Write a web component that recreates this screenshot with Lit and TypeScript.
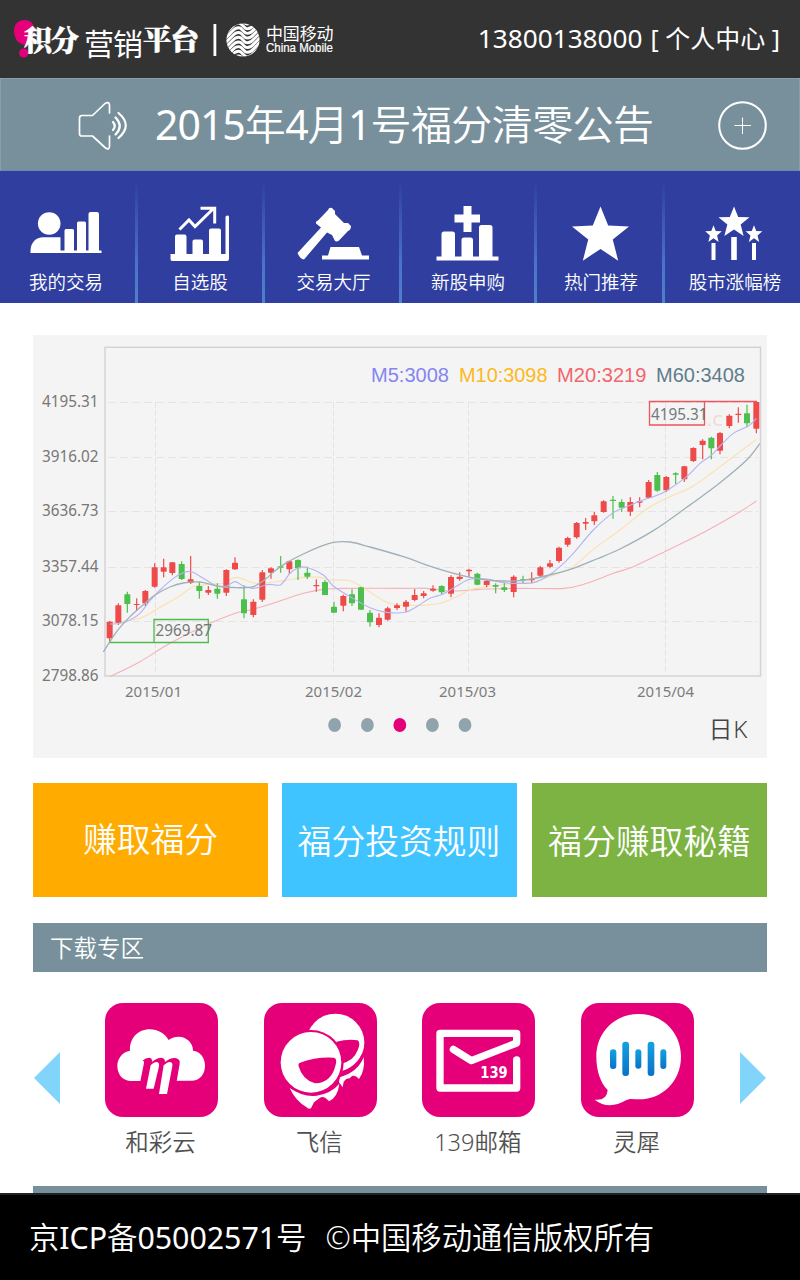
import { LitElement, html, svg, css } from "lit";
import { customElement } from "lit/decorators.js";

type Point = [number, number];
/** x, body top, body bottom, high, low, colour flag */
type Candle = [number, number, number, number, number, "r" | "g"];
/** A slice of the chart; its rows are stored in thirds of a pixel from the origin. */
interface Slice<T> {
  x: number;
  y: number;
  rows: T[];
}

const A: Point = [30, 330];
const B: Point = [270, 460];
const C: Point = [520, 340];
const slice = <T>(o: Point, rows: T[]): Slice<T> => ({ x: o[0], y: o[1], rows });

const CANDLES: Slice<Candle>[] = [
  slice<Candle>(A, [
    [239, 875, 925, 873, 937, "r"], [265, 826, 878, 820, 885, "r"], [292, 793, 822, 785, 848, "g"],
    [320, 822, 825, 805, 843, "r"], [346, 783, 820, 780, 828, "r"], [374, 712, 770, 700, 773, "r"],
    [401, 712, 725, 686, 742, "r"], [427, 697, 729, 697, 736, "r"], [455, 702, 747, 694, 750, "g"],
    [482, 748, 759, 678, 762, "r"], [508, 768, 783, 755, 806, "g"], [535, 780, 788, 768, 795, "r"],
    [562, 776, 791, 760, 806, "g"], [589, 720, 788, 718, 798, "r"], [615, 698, 718, 682, 720, "r"],
    [642, 808, 850, 766, 865, "g"], [670, 815, 855, 808, 862, "r"], [697, 727, 809, 720, 816, "r"],
    [723, 715, 728, 712, 746, "r"],
  ]),
  slice<Candle>(B, [
    [32, 319, 323, 288, 338, "g"], [58, 304, 328, 302, 343, "r"], [84, 300, 325, 298, 360, "g"],
    [112, 338, 350, 320, 357, "g"], [139, 375, 379, 358, 395, "r"], [165, 366, 405, 360, 405, "g"],
    [192, 440, 458, 425, 458, "g"], [220, 408, 437, 404, 454, "r"], [246, 403, 430, 388, 438, "g"],
    [273, 382, 449, 380, 450, "g"], [300, 458, 487, 450, 500, "g"], [327, 473, 495, 460, 502, "r"],
    [353, 445, 479, 440, 482, "r"], [381, 436, 444, 430, 450, "r"], [408, 425, 440, 420, 455, "r"],
    [434, 405, 420, 387, 424, "r"], [461, 400, 408, 393, 415, "r"], [489, 386, 392, 376, 395, "r"],
    [515, 378, 397, 376, 404, "g"], [543, 351, 401, 346, 412, "r"], [569, 350, 357, 337, 362, "r"],
    [597, 329, 334, 326, 350, "r"], [622, 341, 374, 338, 376, "g"], [650, 363, 375, 358, 382, "r"],
    [677, 375, 380, 370, 400, "g"], [703, 382, 390, 368, 396, "g"], [731, 350, 396, 346, 412, "r"],
    [759, 358, 361, 347, 370, "g"], [785, 356, 361, 337, 370, "r"],
  ]),
  slice<Candle>(C, [
    [61, 682, 707, 678, 712, "r"], [90, 670, 680, 660, 685, "r"], [117, 623, 663, 620, 668, "r"],
    [143, 594, 614, 590, 620, "r"], [170, 549, 592, 546, 596, "r"], [197, 546, 551, 534, 570, "r"],
    [223, 526, 544, 516, 555, "r"], [251, 484, 516, 481, 518, "r"], [279, 479, 483, 468, 536, "g"],
    [305, 486, 503, 478, 516, "g"], [331, 486, 515, 472, 528, "r"], [359, 484, 488, 472, 502, "r"],
    [386, 426, 473, 420, 475, "r"], [412, 405, 452, 396, 455, "g"], [439, 411, 451, 408, 456, "r"],
    [467, 400, 404, 397, 432, "g"], [493, 379, 418, 377, 426, "r"], [520, 324, 363, 322, 366, "r"],
    [548, 302, 315, 298, 358, "r"], [574, 293, 325, 290, 358, "g"], [600, 279, 332, 276, 343, "r"],
    [628, 227, 258, 223, 265, "r"], [655, 221, 225, 202, 248, "r"], [681, 220, 250, 194, 262, "g"],
    [709, 186, 266, 184, 280, "r"],
  ]),
];

const AVERAGES: { cls: string; parts: Slice<Point>[] }[] = [
  {
    cls: "m20",
    parts: [
      slice<Point>(A, [[240, 1040], [330, 995], [420, 940], [540, 880], [620, 848], [660, 840]]),
      slice<Point>(B, [[0, 433], [100, 400], [160, 388], [220, 385], [400, 385], [470, 385], [540, 393], [600, 390], [650, 387]]),
      slice<Point>(C, [[0, 745], [130, 745], [200, 730], [280, 700], [340, 680], [440, 632], [560, 572], [660, 515], [709, 483]]),
    ],
  },
  {
    cls: "m10",
    parts: [
      slice<Point>(A, [[240, 880], [330, 865], [390, 832], [450, 797], [490, 770], [540, 762], [580, 760], [620, 742], [680, 760]]),
      slice<Point>(B, [[40, 362], [100, 352], [150, 352], [180, 360], [240, 362], [290, 390], [340, 422], [380, 435], [450, 436], [510, 430], [560, 410], [600, 390], [650, 380], [720, 372]]),
      slice<Point>(C, [[40, 725], [100, 706], [160, 680], [220, 628], [300, 570], [380, 507], [440, 475], [520, 438], [600, 380], [660, 335], [709, 298]]),
    ],
  },
  {
    cls: "m5",
    parts: [
      slice<Point>(A, [[240, 882], [270, 880], [300, 870], [330, 850], [360, 812], [390, 780], [430, 745], [460, 728], [485, 725], [520, 745], [560, 768], [590, 768], [615, 755], [640, 768], [670, 775], [700, 767]]),
      slice<Point>(B, [[0, 373], [32, 374], [60, 340], [84, 324], [110, 322], [160, 345], [190, 378], [240, 410], [300, 443], [350, 457], [405, 457], [440, 440], [480, 415], [520, 402], [560, 378], [600, 358], [650, 357], [700, 368]]),
      slice<Point>(C, [[0, 730], [40, 728], [80, 710], [120, 680], [160, 640], [220, 570], [280, 518], [320, 500], [370, 480], [400, 470], [440, 452], [500, 410], [540, 370], [575, 345], [600, 318], [640, 280], [685, 258], [709, 235]]),
    ],
  },
  {
    cls: "m60",
    parts: [
      slice<Point>(A, [[220, 966], [260, 905], [300, 860], [340, 824], [375, 795], [420, 771], [460, 759], [510, 756], [560, 768], [620, 773], [670, 770], [710, 745]]),
      slice<Point>(B, [[10, 336], [50, 308], [100, 282], [150, 260], [190, 247], [240, 246], [300, 261], [400, 290], [500, 325], [590, 350], [650, 360], [700, 363]]),
      slice<Point>(C, [[0, 722], [50, 714], [100, 702], [160, 685], [230, 657], [300, 627], [400, 572], [500, 502], [600, 428], [680, 360], [720, 310]]),
    ],
  },
];

/** Catmull-Rom spline through the points, as a cubic Bezier path. */
function smooth(parts: Slice<Point>[]): string {
  const p = parts.flatMap((s) => s.rows.map(([x, y]): Point => [s.x + x / 3, s.y + y / 3]));
  let d = `M${p[0]}`;
  for (let i = 0; i < p.length - 1; i++) {
    const a = p[i - 1] ?? p[i];
    const b = p[i];
    const c = p[i + 1];
    const e = p[i + 2] ?? c;
    d += `C${b[0] + (c[0] - a[0]) / 6} ${b[1] + (c[1] - a[1]) / 6} ${c[0] - (e[0] - b[0]) / 6} ${c[1] - (e[1] - b[1]) / 6} ${c}`;
  }
  return d;
}

@customElement("k-chart")
export class KChart extends LitElement {
  static styles = css`
    :host { display: block; }
    svg { display: block; width: 734px; height: 423px; background: #f4f4f4; }
    .frame { fill: none; stroke: #d2d2d6; stroke-width: 1.4; }
    .grid { stroke: #e4e4e4; stroke-width: 1; stroke-dasharray: 8 4; }
    .grid.v { stroke-dasharray: 6 2; }
    .axis { font: 15.5px "Noto Sans", sans-serif; fill: #777; }
    .date { font: 15px "Noto Sans", sans-serif; fill: #7c7c7c; }
    .legend { font: 20px "Liberation Sans", sans-serif; }
    .mark { font: 15.5px "Noto Sans", sans-serif; fill: #737a7a; }
    .type { font: 350 24px "Noto Sans", "Noto Sans CJK SC", sans-serif; fill: #444; }
    .r { fill: #ef4a4a; stroke: #ef4a4a; }
    .g { fill: #4cbf4c; stroke: #4cbf4c; }
    .wick { stroke-width: 1.2; }
    .m5, .m10, .m20, .m60 { fill: none; stroke-width: 1.1; }
    .m5 { stroke: #b4b4f4; }
    .m10 { stroke: #fbe0ae; }
    .m20 { stroke: #f4b2b6; }
    .m60 { stroke: #9fb0ba; stroke-width: 1.3; }
    .low { fill: none; stroke: #4fba4f; stroke-width: 1.3; }
    .high { fill: none; stroke: #ea5560; stroke-width: 1.3; }
    .ghost { font: 20px "DejaVu Sans", sans-serif; fill: #f2d9da; }
    .dot { fill: #90a4ae; }
    .dot.on { fill: #e5007a; }
  `;

  render() {
    const levels: [string, number][] = [
      ["4195.31", 402], ["3916.02", 457], ["3636.73", 511],
      ["3357.44", 567], ["3078.15", 621], ["2798.86", 676],
    ];
    const months: [string, number, number][] = [
      ["2015/01", 125, 155.5], ["2015/02", 305, 333.5], ["2015/03", 439, 468.5], ["2015/04", 637, 665.5],
    ];
    const legend: [string, number, number, string][] = [
      ["M5:3008", 371, 78, "#8585f2"], ["M10:3098", 459, 88.5, "#fcb91c"],
      ["M20:3219", 557, 89.5, "#f2656c"], ["M60:3408", 656, 89, "#607d8b"],
    ];
    return html`<svg viewBox="33 335 734 423">
      <rect class="frame" x="105" y="347.3" width="655.5" height="328.7" />
      ${levels.slice(0, 5).map(([, y]) => svg`<path class="grid" d="M108 ${y + 0.5}H758" />`)}
      ${months.map(([, , x]) => svg`<path class="grid v" d="M${x} 402V674" />`)}
      ${levels.map(([t, y]) => svg`<text class="axis" x="42" y="${y + 5.4}" textLength="56.500" lengthAdjust="spacingAndGlyphs">${t}</text>`)}
      ${months.map(([t, x]) => svg`<text class="date" x="${x}" y="697.400" textLength="57" lengthAdjust="spacingAndGlyphs">${t}</text>`)}
      ${legend.map(([t, x, w, c]) => svg`<text class="legend" x="${x}" y="381.500" fill="${c}" textLength="${w}" lengthAdjust="spacingAndGlyphs">${t}</text>`)}
      <text class="ghost" x="706" y="426">.c</text>
      ${AVERAGES.slice(0, 2).map((a) => svg`<path class="${a.cls}" d="${smooth(a.parts)}" />`)}
      ${CANDLES.map((s) => s.rows.map(([x, t, b, h, l, c]) => {
        const cx = s.x + x / 3;
        return svg`<g class="${c}">
          <path class="wick" d="M${cx} ${s.y + h / 3}V${s.y + l / 3}" />
          <rect stroke="none" x="${cx - 3}" width="6" y="${s.y + t / 3}" height="${(b - t) / 3}" rx=".6" />
        </g>`;
      }))}
      ${AVERAGES.slice(2).map((a) => svg`<path class="${a.cls}" d="${smooth(a.parts)}" />`)}
      <path class="low" d="M109.500 642.500H154V619.500H208.300V642.500H154" />
      <text class="mark" x="155.500" y="636.400" textLength="56.500" lengthAdjust="spacingAndGlyphs">2969.87</text>
      <path class="high" d="M757 401.500H649.500V425H704.500V401.500" />
      <text class="mark" x="651" y="419.500" textLength="56.500" lengthAdjust="spacingAndGlyphs">4195.31</text>
      ${[334.6, 367.4, 399.8, 432.4, 465].map((x, i) => svg`<ellipse class="dot ${i === 2 ? "on" : ""}" cx="${x}" cy="725" rx="6.400" ry="6.900" />`)}
      <text class="type" x="708.500" y="738" textLength="39">日K</text>
    </svg>`;
  }
}

const STAR = "M0-10 2.700-3.300 10-3 4.300 1.600 6.200 9 0 4.900-6.200 9-4.300 1.600-10-3-2.700-3.300Z";

/* Menu glyphs, drawn on a 100 x 62 canvas. */
const NAV = [
  {
    label: "我的交易",
    icon: svg`<g transform="translate(-1 -1)"><circle cx="34.200" cy="19.500" r="11.300"/><path d="M15.500 49V46.500C16 38 21 33.700 28 33.300H45.500V46.500H49.500V26.500Q49.500 25 51 25H57.500Q59 25 59 26.500V46.500H62V19Q62 17.500 63.500 17.500H69.500Q71 17.500 71 19V46.500H73.500V10Q73.500 8 75.500 8H82Q84 8 84 10V46.500H86.500V49Z"/></g>`,
  },
  {
    label: "自选股",
    icon: svg`<path d="M20.500 52V49H25V31.500Q25 29.500 27 29.500H34.500Q36.500 29.500 36.500 31.500V49H42.500V36.500Q42.500 34.500 44.500 34.500H51Q53 34.500 53 36.500V49H59V25.500Q59 23.500 61 23.500H69Q71 23.500 71 25.500V49H75.500V12Q75.500 10.500 77.300 10.500T79 12V54Q79 56 77 56H22Q20.500 56 20.500 54Z"/><path d="M29.500 24.500 39 15 45 21.500 63.500 3.500M50.500 3.300H64.700V18.500" fill="none" stroke="#fff" stroke-width="3"/>`,
  },
  {
    label: "交易大厅",
    icon: svg`<path d="M13.500 48 37 22.500 32 18.500Q31.500 16 34 15.500L44 5Q45 2 48 3L51 6V9L60 18H64L67 21Q67 25 64 26L55 35.500Q53 37 51 36L48 30 43 27.500 20 54.500Q16 54 13.500 48Z"/><path d="M38 54.500V50.500H44L46.500 42H75L78 50.500H85V54.500Z"/>`,
  },
  {
    label: "新股申购",
    icon: svg`<path transform="translate(-.5 2)" d="M19 53.500V49.500H24V27Q24 24.500 26.500 24.500H35Q37.500 24.500 37.500 27V49.500H44V33Q44 30.500 46.500 30.500H53Q55.500 30.500 55.500 33V49.500H61.500V20.500Q61.500 18 64 18H72.500Q75 18 75 20.500V49.500H81V53.500ZM46 -1H54V7.500H62.500V15.500H54V25H46V15.500H37V7.500H46Z"/>`,
  },
  { label: "热门推荐", icon: svg`<path transform="translate(49.500 30) scale(2.850 2.850)" d="${STAR}"/>` },
  {
    label: "股市涨幅榜",
    icon: svg`<g transform="translate(-.5 1)"><path transform="translate(49.500 16) scale(1.550)" d="${STAR}"/><path transform="translate(29 28) scale(.83 .88)" d="${STAR}"/><path transform="translate(69.500 28) scale(.83 .88)" d="${STAR}"/><path d="M46.700 31H52.300V54H46.700ZM27 37H31V54H27ZM67.500 37H71.500V54H67.500Z"/></g>`,
  },
];

/* Application tiles, drawn on a 339 x 342 canvas. */
const APPS = [
  {
    label: "和彩云",
    art: svg`<g transform="translate(-315 -39)"><path fill="#fff" d="M397 273C370 275 352 254 352 228C352 205 368 185 390 182C388 145 414 118 449 118C474 118 495 131 506 150C540 126 580 150 579 182C601 184 615 203 615 227C615 254 598 274 570 272Z"/><path fill="#e5007a" d="M427 212Q438 203 447 203 457 203 456 215 476 201 487 204 495 206 495 216 512 202 526 204 542 207 539 221L530 274H500L490 299H466L458 274H421L432 219Q433 211 427 212Z"/><path fill="#fff" d="M452 226Q467 212 475 218 479 221 476 233L461 296H438ZM491 226Q507 211 515 218 519 221 516 234L501 312H477Z"/></g>`,
  },
  {
    label: "飞信",
    art: svg`<g transform="translate(-789 -39)"><circle cx="1003" cy="158" r="87" fill="#fff"/><path fill="#fff" d="M1088 202Q1093 242 1074 267 1064 255 1053 258L1046 265Q1036 264 1028 275L1025 292 1014 277 1016 262Q1070 247 1088 202Z"/><path fill="#e5007a" d="M1006 155Q1042 146 1070 151 1080 158 1070 181 1058 213 1021 221L1013 194Z"/><path fill="none" stroke="#e5007a" stroke-width="5" d="M1020 248Q1065 235 1087 190"/><circle cx="930" cy="218" r="98" fill="#e5007a"/><circle cx="930" cy="217" r="91" fill="#fff"/><path fill="#e5007a" d="M895 219Q946 200 998 203 1008 205 1005 220 993 280 942 280 904 270 893 229 891 221 895 219Z"/><path fill="#fff" d="M866 294Q906 322 947 317 991 310 1015 281 1011 320 984 334 969 316 957 323L939 337 930 355Q922 359 916 351 884 333 866 294Z"/></g>`,
  },
  {
    label: "139邮箱",
    art: svg`<g transform="translate(-66 -39)"><path fill="none" stroke="#fff" stroke-width="22" stroke-linecap="round" stroke-linejoin="round" d="M350 210V294H120V130H350V159L214 212 160 178"/><text x="241" y="264" textLength="82" lengthAdjust="spacingAndGlyphs" font-family="DejaVu Sans" font-weight="700" font-size="46" fill="#fff">139</text></g>`,
  },
  {
    label: "灵犀",
    art: svg`<g transform="translate(-543 -39)"><path fill="#fff" d="M716 72C790 72 843 129 843 200 843 274 786 329 716 328 701 328 690 325 678 331Q626 361 584 329 621 333 623 300C600 276 589 240 589 200 589 129 642 72 716 72Z"/><defs><linearGradient id="wave" x2="0" y2="1"><stop stop-color="#12a2e2"/><stop offset="1" stop-color="#0b72c6"/></linearGradient></defs><g fill="url(#wave)"><rect x="630" y="178" width="19" height="59" rx="9"/><rect x="667" y="155" width="20" height="103" rx="9"/><rect x="706" y="178" width="18" height="58" rx="9"/><rect x="743" y="155" width="20" height="103" rx="9"/><rect x="781" y="178" width="18" height="59" rx="9"/></g></g>`,
  },
];

@customElement("app-root")
export class AppRoot extends LitElement {
  static styles = css`
    :host {
      display: flex; flex-direction: column; width: 800px; height: 1280px; overflow: hidden;
      background: #fff; color: #fff; white-space: nowrap;
      font-family: "Noto Sans", "Noto Sans CJK SC", sans-serif;
    }
    svg { display: block; flex: none; }
    .top { display: flex; justify-content: space-between; height: 78px; background: #333; }
    .heavy { font-family: "Noto Serif CJK SC", "Noto Sans CJK SC", serif; font-weight: 900; }
    .light { font-family: "Noto Sans CJK SC", sans-serif; font-weight: 400; }
    .user { display: flex; gap: 8px; padding: 0 20px 0 0; line-height: 76px; font-size: 25px; }
    .phone { font-size: 26.2px; }
    .latin { font-weight: 400; }
    .notice {
      display: flex; align-items: center; box-sizing: border-box; height: 93px; padding: 2px 32px 0 77px;
      background: #78909c; border: 1px solid #8a9fa9; border-bottom-color: #6f87b8;
    }
    .notice-text { flex: 1; padding-left: 26px; font-size: 41px; line-height: 89px; margin-top: -3px; letter-spacing: -0.6px; font-weight: 350; }
    .notice-text .latin { letter-spacing: -1px; }
    .nav { display: grid; grid-template-columns: 138px 127px 137px 135px 128px 135px; height: 132px; background: #303f9f; }
    .item {
      display: flex; flex-direction: column; align-items: center; padding: 34px 0 0;
      border-right: 3px solid; border-image: linear-gradient(#303f9f 8%, #4a74c8 70%, #4f80cc) 1;
      fill: #fff; font-size: 18.5px; font-weight: 350;
    }
    .item:first-child { padding-right: 3px; }
    .item:last-child { border-right: 0; padding-left: 5px; }
    .item:nth-child(3), .item:nth-child(5) { padding-left: 3px; }
    .item-text { line-height: 27px; margin-top: 1px; }
    .main { display: flex; flex-direction: column; flex: 1; padding: 32px 33px 0; overflow: hidden; }
    .actions { display: grid; grid-template-columns: 235px 235px 235px; justify-content: space-between; margin-top: 25px; }
    .action { height: 114px; line-height: 116px; text-align: center; font-size: 33.8px; font-weight: 350; box-sizing: border-box; }
    .earn { background: #ffab00; line-height: 112px; }
    .rules { background: #40c4ff; margin: 0 1px 0 -1px; }
    .tips { background: #7cb342; }
    .heading { height: 49px; line-height: 51px; margin-top: 26px; padding-left: 17px; background: #78909c; font-size: 23.5px; font-weight: 350; }
    .apps { display: flex; justify-content: space-between; margin-top: 31px; height: 183px; padding: 0 1px; }
    .tiles { display: grid; grid-template-columns: repeat(4, 158.6px); margin: 0 -1px 0 -2px; }
    .tile { display: flex; flex-direction: column; align-items: center; color: #505050; font-size: 23.5px; font-weight: 350; }
    .tile-art { width: 113px; height: 114px; background: #e5007a; border-radius: 18px; }
    .tile-text { line-height: 30px; margin: 10px 2px 0 0; }
    .arrow { margin-top: 49px; fill: #81d4fa; }
    .next { flex: none; height: 7px; background: #78909c; }
    .foot { height: 87px; flex: none; box-sizing: border-box; border-top: 2px solid #1d2224; background: #000; line-height: 86px; padding-left: 29px; font-size: 30.4px; letter-spacing: -0.05px; font-weight: 350; }
    .copy { margin-left: 19px; }
  `;

  private renderLogo() {
    const stripes = [-18.8, -14.1, -9.4, -4.7, 0, 4.7, 9.4, 14.1, 18.8];
    return html`<svg width="350" height="78" fill="#fff">
      <defs><clipPath id="disc"><circle cx="243" cy="40" r="16.600" /></clipPath></defs>
      <path fill="#e5007a" d="M24 20C34 20 37 29 31 36L26 46 18 42C12 34 12 21 24 20Z" />
      <circle cx="23.700" cy="53" r="4.600" fill="#e5007a" />
      <text class="heavy" x="24" y="50.500" font-size="28" textLength="55" stroke="#fff" stroke-width=".5">积分</text>
      <text class="light" x="84" y="55" font-size="30" textLength="59">营销</text>
      <text class="heavy" x="143" y="50" font-size="28.500" textLength="56" stroke="#fff" stroke-width=".5">平台</text>
      <rect x="213.500" y="24" width="2.800" height="32" />
      <g clip-path="url(#disc)" fill="none" stroke="#fff" stroke-width="2.900">
        ${stripes.map((y) => svg`<path transform="translate(243 ${40 + y})" d="M-22 12-11 1Q-6-4.500-2-2L2 2Q6 4.500 11-1L22-12" />`)}
      </g>
      <text class="light" x="266" y="40" font-size="17" textLength="67.500" font-weight="500">中国移动</text>
      <text x="266" y="52" font-size="12" textLength="67" lengthAdjust="spacingAndGlyphs" font-family="Liberation Sans" stroke="#fff" stroke-width=".2">China Mobile</text>
    </svg>`;
  }

  render() {
    return html`
      <header class="top">
        ${this.renderLogo()}
        <div class="user"><span class="phone">13800138000</span><span>[ 个人中心 ]</span></div>
      </header>
      <div class="notice">
        <svg width="51" height="50" fill="none" stroke="#fff" stroke-width="1.700" stroke-linecap="round" stroke-linejoin="round">
          <path d="M31.500 12V4Q31 0 27 2.500L14.500 14.500H4Q1.500 14.500 1.500 17V32.500Q1.500 35 4 35H14.500L27 46.500Q31.500 50 31.500 45V35" />
          <path stroke-width="2.200" d="M35 21Q38.500 25 35 29M37.500 16.500Q46 25 37.500 33.500M40.500 12Q55 24.500 40.500 37" />
        </svg>
        <div class="notice-text"><span class="latin">2015</span>年<span class="latin">4</span>月<span class="latin">1</span>号福分清零公告</div>
        <svg width="49" height="49" fill="none" stroke="#fff"><circle cx="24.500" cy="24.500" r="23.300" stroke-width="2" /><path d="M16.500 24.500H33M24.500 16.500V33" /></svg>
      </div>
      <nav class="nav">
        ${NAV.map((n) => html`<div class="item"><svg width="100" height="62" overflow="visible">${n.icon}</svg><span class="item-text">${n.label}</span></div>`)}
      </nav>
      <main class="main">
        <k-chart></k-chart>
        <div class="actions">
          <div class="action earn">赚取福分</div>
          <div class="action rules">福分投资规则</div>
          <div class="action tips">福分赚取秘籍</div>
        </div>
        <div class="heading">下载专区</div>
        <div class="apps">
          <svg class="arrow" width="26" height="52"><path d="M0 26 26 0V52Z" /></svg>
          <div class="tiles">
            ${APPS.map((a) => html`<div class="tile"><svg class="tile-art" viewBox="0 0 339 342">${a.art}</svg><span class="tile-text">${a.label}</span></div>`)}
          </div>
          <svg class="arrow" width="26" height="52"><path d="M26 26 0 0V52Z" /></svg>
        </div>
        <div class="next"></div>
      </main>
      <footer class="foot"><span>京<span class="latin">ICP</span>备<span class="latin">05002571</span>号</span><span class="copy">©中国移动通信版权所有</span></footer>
    `;
  }
}
